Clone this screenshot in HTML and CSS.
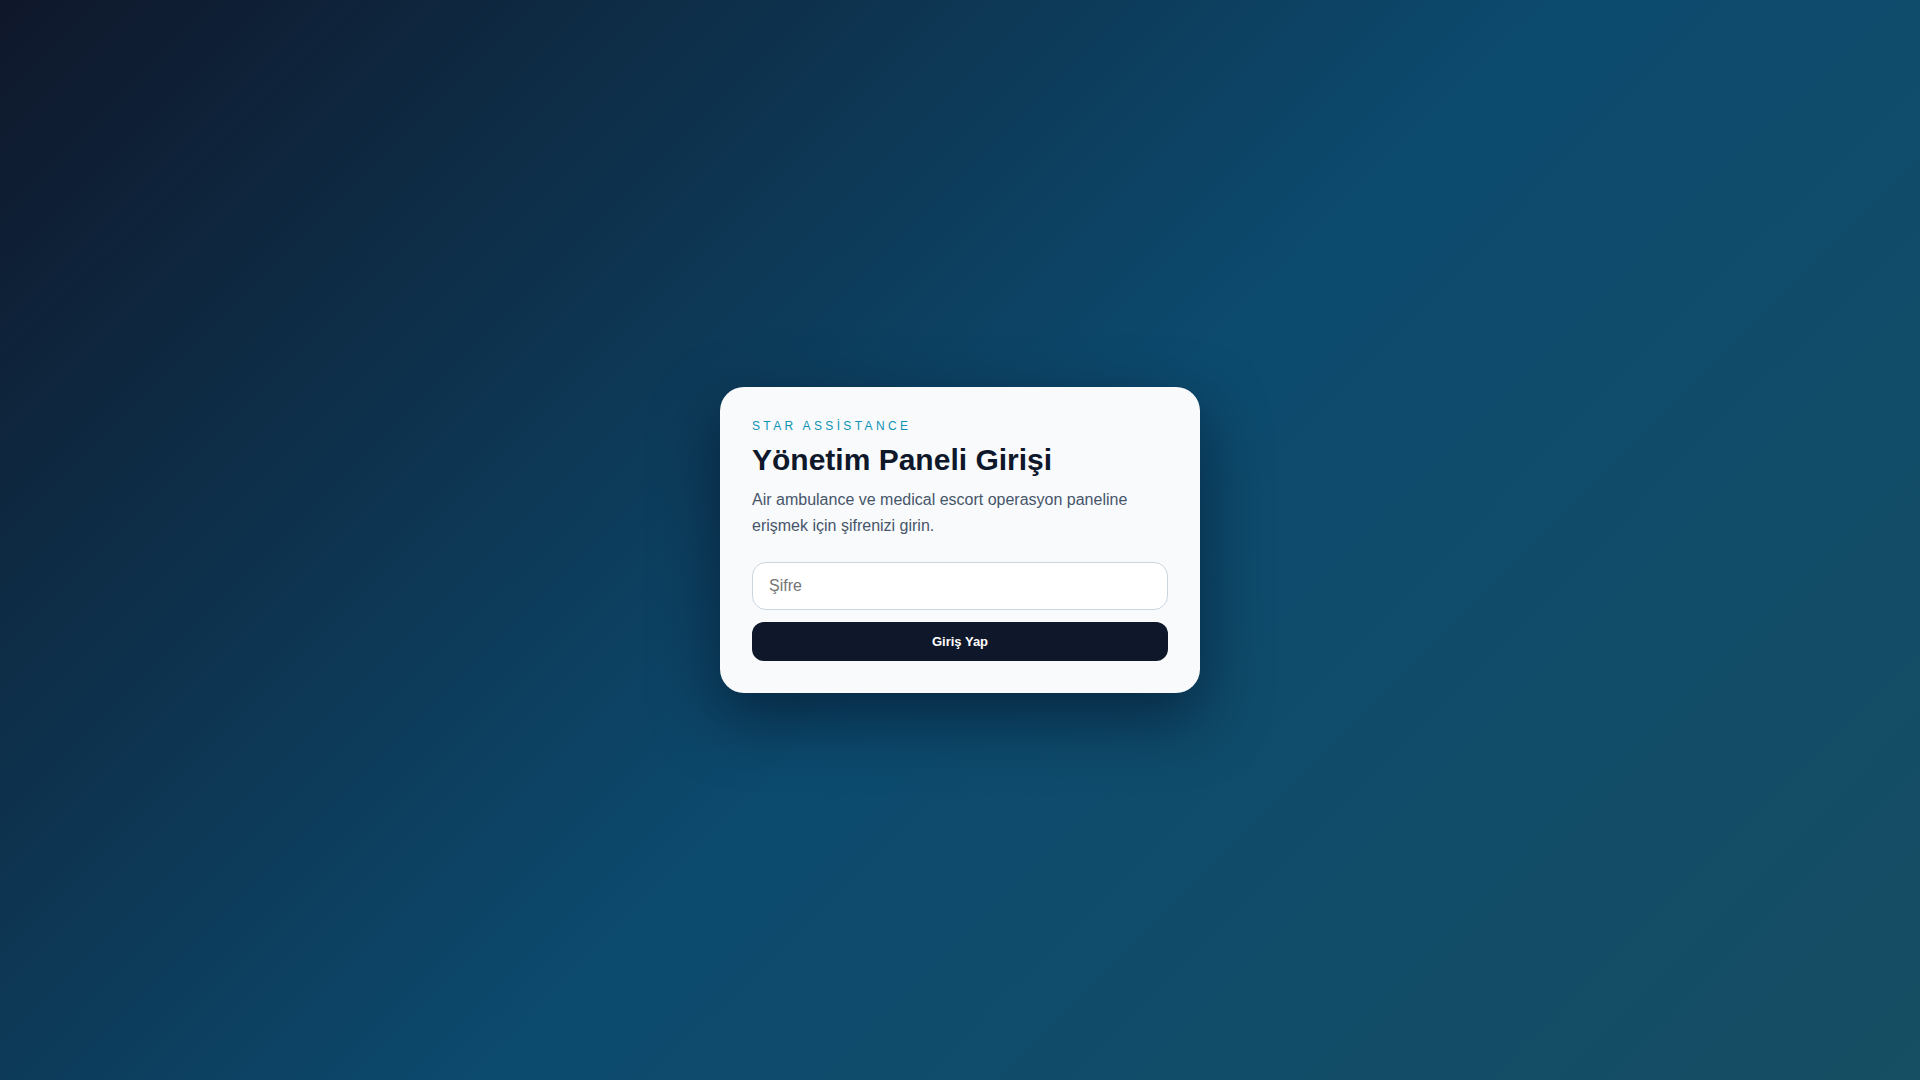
FILE: index.html
```html
<!DOCTYPE html>
<html lang="tr">
<head>
<meta charset="utf-8">
<title>Yönetim Paneli Girişi</title>
<link rel="stylesheet" href="styles.css">
</head>
<body>
<main class="page">
  <form class="card" onsubmit="return false;">
    <p class="brand">STAR ASSİSTANCE</p>
    <h1 class="title">Yönetim Paneli Girişi</h1>
    <p class="desc">Air ambulance ve medical escort operasyon paneline erişmek için şifrenizi girin.</p>
    <input class="field" type="password" placeholder="Şifre">
    <button class="btn" type="submit">Giriş Yap</button>
  </form>
</main>
</body>
</html>
```

FILE: styles.css
```css
* { box-sizing: border-box; }
html, body {
  margin: 0;
  height: 100%;
}
body {
  font-family: "Liberation Sans", Arial, sans-serif;
  background: linear-gradient(135deg, #0f172a 0%, #0c4a6e 52%, #164e63 100%);
  min-height: 100vh;
}
.page {
  min-height: 100vh;
  display: flex;
  align-items: center;
  justify-content: center;
}
.card {
  width: 480px;
  background: #f8fafc;
  border-radius: 24px;
  padding: 32px;
  display: flex;
  flex-direction: column;
  box-shadow: 0 24px 64px rgba(2, 6, 23, 0.5);
}
.brand {
  margin: 0 0 9px;
  font-size: 12px;
  letter-spacing: 0.28em;
  color: #0e93b5;
}
.title {
  margin: 0 0 9px;
  font-size: 30px;
  line-height: 1.2;
  font-weight: 700;
  color: #0f172a;
}
.desc {
  margin: 0 0 24px;
  font-size: 16px;
  line-height: 1.6;
  color: #475569;
}
.field {
  width: 100%;
  height: 48px;
  padding: 0 16px;
  border: 1px solid #cbd5e1;
  border-radius: 14px;
  background: #ffffff;
  font-family: inherit;
  font-size: 16px;
  color: #0f172a;
  outline: none;
}
.field::placeholder { color: #757575; }
.btn {
  margin-top: 12px;
  width: 100%;
  height: 39px;
  border: 0;
  border-radius: 12px;
  background: #0f172a;
  color: #ffffff;
  font-family: inherit;
  font-size: 13px;
  font-weight: 700;
  cursor: pointer;
}
```
